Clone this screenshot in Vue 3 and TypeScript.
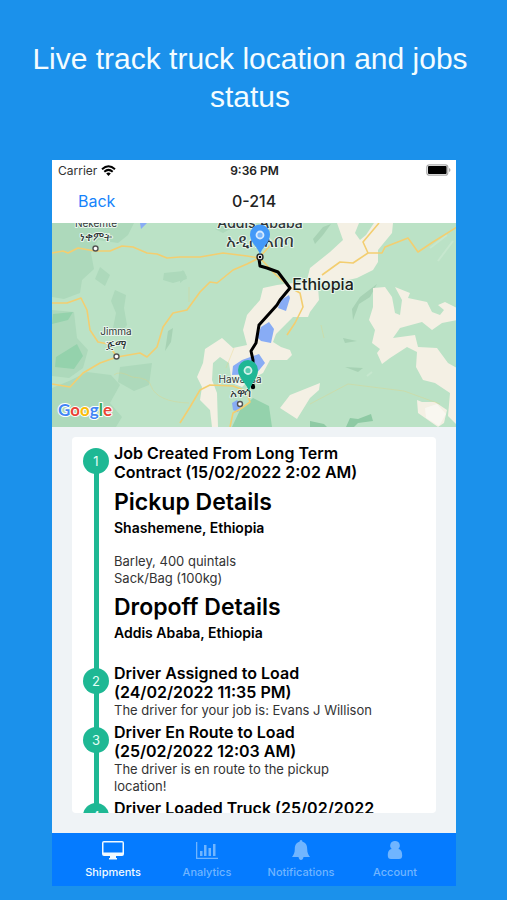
<script setup lang="ts">
interface Step {
  title: string
  details?: { heading: string; place: string; lines: string[] }[]
  lines: string[]
}

const steps: Step[] = [
  {
    title: 'Job Created From Long Term Contract (15/02/2022 2:02 AM)',
    details: [
      { heading: 'Pickup Details', place: 'Shashemene, Ethiopia', lines: ['Barley, 400 quintals', 'Sack/Bag (100kg)'] },
      { heading: 'Dropoff Details', place: 'Addis Ababa, Ethiopia', lines: [] },
    ],
    lines: [],
  },
  { title: 'Driver Assigned to Load (24/02/2022 11:35 PM)', lines: ['The driver for your job is: Evans J Willison'] },
  { title: 'Driver En Route to Load (25/02/2022 12:03 AM)', lines: ['The driver is en route to the pickup location!'] },
  { title: 'Driver Loaded Truck (25/02/2022', lines: [] },
]

const tabs = ['Shipments', 'Analytics', 'Notifications', 'Account']
</script>

<template>
  <main class="page">
    <h1 class="headline">Live track truck location and jobs status</h1>

    <section class="phone">
      <div class="status">
        <span class="carrier">
          Carrier
          <svg width="15" height="11" viewBox="0 0 15 11" aria-hidden="true">
            <path d="M1 4.200Q7.500-1.600 14 4.200" fill="none" stroke="#000" stroke-width="2" />
            <path d="M3.300 6.700Q7.500 3 11.700 6.700" fill="none" stroke="#000" stroke-width="2" />
            <path d="M5.200 8.500Q7.500 6.500 9.800 8.500L7.500 11Z" />
          </svg>
        </span>
        <strong class="clock">9:36 PM</strong>
        <svg class="battery" width="25" height="12" viewBox="0 0 25 12" aria-hidden="true">
          <rect x=".8" y=".8" width="21" height="10.400" rx="2.500" fill="#fff" stroke="#aaa" stroke-width="1.200" />
          <rect x="2" y="2" width="18.600" height="8" rx="1" />
          <path d="M23 4v4q1.500-.5 1.500-2T23 4Z" fill="#aaa" />
        </svg>
      </div>

      <header class="bar">
        <button class="back" type="button">Back</button>
        <h2 class="job">0-214</h2>
      </header>

      <svg class="map" viewBox="0 0 404 204" preserveAspectRatio="xMidYMid slice" role="img" aria-label="Route map">
        <rect width="405" height="204" fill="#bbe2c6" />
        <g fill="#add9bb">
          <path d="M0 0H82L76 12 66 20 46 17 39 30 42 46 30 57 28 70 12 76 0 74Z" />
          <path d="M48 44l10 8-5 11-10-7ZM63 67l11 5-2 13 3 17-8 10-6-7 3-15-5-12ZM112 50l20-2 3 8-14 4-10-3Z" />
          <path d="M0 87l22 2 3 26 11 12-5 18-14 10-17-2ZM17 158l18-9 24 3 9 10-10 18 12 14-6 10H0V165Z" />
          <path d="M68 144l32-4-3 22-15 6-16-9ZM172 0l-9 6 8 4 18-10ZM131 47l4 7-7 6v-10Z" />
        </g>
        <path d="M4 134l21-13 6 12-9 13-19-2ZM1 91l20-2-5 8-16 4ZM180 204l8-17 13-12 16 8 3 21Z" fill="#94d2ac" />
        <path d="M116 108l5-3-2 14-6 9ZM300 86l8-12 17-13-7 13-11 7-6 16ZM291 115l14 3-12 2ZM261 16l10-12 8-3-8 11-8 9ZM293 144l18 1-5 4Z" fill="#a7d2b4" />
        <path d="M294 204l4-9 8 1 13-5 2 7-15 2-4 4ZM258 198l14 3 3 3h-17Z" fill="#8ecaa4" />
        <path d="M378 25l17-13M386 38l15-20M315 153l5-4" stroke="#c6e7ce" stroke-width="2" />
        <g fill="#f4f0e4">
          <path d="M285 0H341L340 10 326 27 326 39 321 47 305 55 266 64 267 77 258 89 256 94 241 94 235 100 224 111 221 119 229 124 238 127 240 132 235 137 218 137 211 150 196 158 190 164 180 160 177 140 168 134 161 140 160 157 165 170 166 204H160L158 187 148 177 150 164 145 154 151 140 153 126 170 115 181 125 195 122 191 107 195 92 208 77 211 65 225 62 241 60 255 57 258 45 278 29 291 17Z" />
          <path d="M321 65 333 64 340 74 343 90 348 92 350 77 343 64 358 70 356 75 375 79 380 89 388 92 392 87 386 82 393 79 405 85V97L390 100 380 107 370 99 348 105 341 115 363 112 366 124 385 125 396 140 405 145V202L396 193 398 170 383 160 371 157 364 144 365 129 355 124 338 135 330 141 325 130 328 126 320 120 323 107 317 97 321 84Z" />
          <path d="M238 172 268 160 267 167 258 175 245 196 228 185ZM365 177 370 179 383 179 395 187 392 200 386 204 366 190Z" />
        </g>
        <path d="M307 0H322L314 12 308 17 303 10Z" fill="#bbe2c6" />
        <path d="M373 185l12-4 9 10-7 12-13-8Z" fill="#fff" opacity=".45" />
        <path d="M88 0h7l-6 6ZM229 77l8-5 1 3-4 13-8-3ZM209 104l8-5 5 7-3 14-10-2-4-4ZM190 137l17-6 6 9-9 11-24 1 1-9ZM180 180l5-3 5 5-4 7-5-2Z" fill="#88acf5" />
        <g fill="none" stroke="#eace72" stroke-width=".7" opacity=".45">
          <path d="M62 152q5-5 18 2 18 1 19 9 6 16 38 17M258 181l38-20 56 7 36 13M174 145l8-20M137 79v-15M269 102l3 13" />
        </g>
        <g fill="none" stroke="#f3ce70" stroke-width="1.600" stroke-linejoin="round">
          <path d="M0 30 11 28 16 30 26 25 43 28 58 28 70 23 81 24 95 30 105 31 115 35 128 34 148 34 171 30 195 33 207 35" />
          <path d="M0 80 15 80 29 75 35 87 38 107 46 119 56 121 65 134 88 130 95 134 105 124 111 104 121 90 135 87 148 69 158 59 165 60 181 47 195 41 207 35 222 18" />
          <path d="M65 134 48 140 31 150 18 164 0 161M128 200 138 184 148 167 158 162 181 163 194 168 198 179 190 185 181 190 178 204M208 35 224 52 239 65 248 70 251 84 243 100 235 112" />
          <path d="M270 52 288 39 301 40 316 30 311 19 327 0M316 30 330 30 333 24 356 15 366 29 381 19 405 4" />
        </g>
        <path d="M207 36 208 43 215 45 226 49 238 65 228 77 225 82 207 102 204 120 199 128 201 137V165" fill="none" stroke="#000" stroke-width="3" stroke-linejoin="round" />
        <circle cx="201" cy="164" r="2.200" />
        <g fill="#fff" stroke="#555" stroke-width="1.400">
          <circle cx="43.500" cy="25.500" r="2.500" />
          <circle cx="64.500" cy="133.500" r="2.500" />
          <circle cx="188" cy="181" r="2.500" />
          <circle cx="208" cy="34" r="3" stroke="#222" />
        </g>
        <circle cx="208" cy="34" r="1.300" />
        <g class="label">
          <text x="44" y="4" font-size="10">Nekemte</text>
          <text x="44" y="18" font-size="12">ነቀምት</text>
          <text x="64" y="112" font-size="10">Jimma</text>
          <text x="64" y="126" font-size="12">ጅማ</text>
          <text x="208" y="5" font-size="14" font-weight="500">Addis Ababa</text>
          <text x="208" y="24" font-size="17">አዲስ አበባ</text>
          <text x="188" y="160" font-size="10">Hawassa</text>
          <text x="188" y="174" font-size="12">አዋሳ</text>
          <text class="country" x="271" y="67" font-size="16" font-weight="500">Ethiopia</text>
        </g>
        <path d="M208 32C207 25 198 20 198 11.500A10 10 0 0 1 218 11.500C218 20 209 25 208 32Z" fill="#4399f8" />
        <circle cx="208" cy="12" r="3.500" fill="#79b6fb" stroke="#d7eaff" stroke-width="1.800" />
        <path d="M197 169C196 161 186 156 186 147A10 10 0 0 1 206 147C206 156 198 161 197 169Z" fill="#1fb795" />
        <circle cx="196" cy="147.500" r="3.500" fill="#55cbb0" stroke="#d0f2e9" stroke-width="1.800" />
        <text class="google" x="6" y="193">
          <tspan fill="#4285f4">G</tspan><tspan fill="#ea4335">o</tspan><tspan fill="#fbbc05">o</tspan><tspan fill="#4285f4">g</tspan><tspan fill="#34a853">l</tspan><tspan fill="#ea4335">e</tspan>
        </text>
      </svg>

      <div class="content">
        <ol class="timeline">
          <li v-for="(step, i) in steps" :key="step.title" class="step">
            <div class="rail"><span class="dot">{{ i + 1 }}</span></div>
            <div class="body">
              <h3 class="title">{{ step.title }}</h3>
              <div v-for="d in step.details" :key="d.heading" class="detail">
                <h4 class="heading">{{ d.heading }}</h4>
                <p class="place">{{ d.place }}</p>
                <p v-for="l in d.lines" :key="l" class="text">{{ l }}</p>
              </div>
              <p v-for="l in step.lines" :key="l" class="text">{{ l }}</p>
            </div>
          </li>
        </ol>
      </div>

      <nav class="tabs">
        <a v-for="(tab, i) in tabs" :key="tab" href="#" class="tab" :class="{ active: i === 0 }">
          <svg width="22" height="20" viewBox="0 0 22 20" fill="currentColor" aria-hidden="true">
            <path v-if="i === 0" fill-rule="evenodd" d="M2 1H20Q22 1 22 3V14Q22 16 20 16H14V18H15V19.500H7V18H8V16H2Q0 16 0 14V3Q0 1 2 1ZM1.500 2.500V12.500H20.500V2.500Z" />
            <path v-else-if="i === 1" d="M0 2H1.300V17.700H22V19H0ZM4 11H6.500V16H4ZM8 5H10.500V16H8ZM12.500 8H15V16H12.500ZM17 4H19.500V16H17Z" />
            <path v-else-if="i === 2" d="M11 0Q12.500 0 12.500 1.800C16.500 3 17.200 6 17.200 9 17.200 13 18.500 15 20 17H13.500Q13 20 11 20T8.500 17H2C3.500 15 4.800 13 4.800 9 4.800 6 5.500 3 9.500 1.800Q9.500 0 11 0Z" />
            <path v-else d="M11 1A4.600 4.600 0 0 1 14.300 9C17.500 9.500 18.200 12.500 18.200 15.500Q18.200 19 15 19H7Q3.800 19 3.800 15.500C3.800 12.500 4.500 9.500 7.700 9A4.600 4.600 0 0 1 11 1Z" />
          </svg>
          <span>{{ tab }}</span>
        </a>
      </nav>
    </section>
  </main>
</template>

<style>
body {
  margin: 0;
  background: #1b91eb;
}
</style>

<style scoped>
.page {
  box-sizing: border-box;
  min-height: 100vh;
  padding: 40px 51px 14px 52px;
  background: #1b91eb;
  font-family: Inter, "Noto Sans", "Liberation Sans", sans-serif;
}
.headline {
  margin: 0 -24px 44px -32px;
  color: #f3fcff;
  font: 400 30px/38px "Liberation Sans", sans-serif;
  text-align: center;
}
.phone {
  background: #fff;
}
.status,
.bar {
  display: grid;
  grid-template-columns: 1fr auto 1fr;
  align-items: center;
}
.status {
  height: 20px;
  padding: 0 5px 0 6px;
  font-size: 12px;
}
.carrier {
  display: flex;
  align-items: center;
  gap: 4px;
  color: #333;
}
.clock {
  font-weight: 600;
  color: #222;
}
.battery {
  justify-self: end;
}
.bar {
  box-sizing: border-box;
  height: 43px;
  padding: 0 26px 2px;
}
.back {
  justify-self: start;
  padding: 0;
  border: 0;
  background: none;
  color: #1683fb;
  font: 400 16px/20px Inter, sans-serif;
}
.job {
  margin: 0;
  color: #222;
  font-size: 16px;
  font-weight: 500;
  line-height: 20px;
}
.map {
  display: block;
  width: 100%;
}
.label {
  fill: #303638;
  stroke: #e8f6ec;
  stroke-width: 2px;
  stroke-linejoin: round;
  paint-order: stroke;
  text-anchor: middle;
}
.country {
  fill: #1c1f20;
}
.google {
  font-family: Lato, sans-serif;
  font-size: 17px;
  font-weight: 700;
  stroke: #fff;
  stroke-width: 2px;
  stroke-linejoin: round;
  paint-order: stroke;
}
.content {
  padding: 10px 20px 20px;
  background: #eff3f6;
}
.timeline {
  box-sizing: border-box;
  height: 376px;
  margin: 0;
  padding: 7px 10px 0 11px;
  overflow: hidden;
  border-radius: 4px;
  background: #fff;
  list-style: none;
}
.step {
  display: flex;
  gap: 5px;
}
.rail {
  flex: none;
  width: 26px;
  padding-top: 4px;
  background: linear-gradient(#1eb894, #1eb894) center / 5px 100% no-repeat;
}
.step:first-child .rail {
  background-position: center 10px;
}
.dot {
  display: block;
  border-radius: 50%;
  background: #1eb894;
  color: #e5fff7;
  font-size: 13px;
  line-height: 26px;
  text-align: center;
}
.body {
  max-width: 268px;
  padding-bottom: 4px;
  color: #000;
}
.title {
  max-width: 264px;
  margin: 0;
  font-size: 16px;
  font-weight: 600;
  line-height: 19px;
}
.heading {
  margin: 0;
  padding-top: 4px;
  font-size: 23px;
  font-weight: 600;
  line-height: 32px;
}
.place {
  margin: 0;
  padding: 1px 0 17px;
  font-size: 14px;
  font-weight: 600;
  line-height: 17px;
}
.detail:last-child {
  padding-bottom: 2px;
}
.text {
  margin: 0;
  color: #333;
  font-size: 13px;
  line-height: 17px;
}
.tabs {
  display: grid;
  grid-template-columns: repeat(4, 1fr);
  padding: 7px 14px 6px;
  background: #057bff;
}
.tab {
  display: flex;
  flex-direction: column;
  align-items: center;
  gap: 4px;
  color: #70b5ff;
  font-size: 11px;
  font-weight: 500;
  line-height: 16px;
  text-decoration: none;
}
.active {
  color: #f2faff;
}
</style>
